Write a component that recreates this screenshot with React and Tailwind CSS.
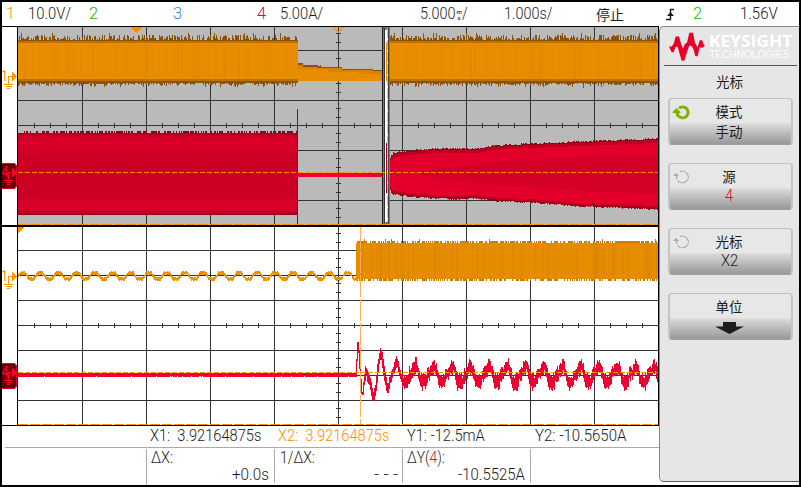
import React, { useLayoutEffect, useRef, useState } from 'react'

const ORANGE = '#ff8c00'

// Small seeded generator so that the noise is the same on each render
function makeRandom(seed) {
  let s = seed
  return () => {
    s = (s * 1664525 + 1013904223) % 4294967296
    return s / 4294967296
  }
}

// Linear interpolation over [x, y] points
function lerp(points, x) {
  if (x <= points[0][0]) return points[0][1]
  for (let i = 1; i < points.length; i++) {
    const [x1, y1] = points[i]
    const [x0, y0] = points[i - 1]
    if (x <= x1) return y0 + ((y1 - y0) * (x - x0)) / (x1 - x0)
  }
  return points[points.length - 1][1]
}

const bar = (x, top, bottom) => `M${x} ${top}h1V${bottom}h-1z`

// One path made of 1px wide columns
function columns(from, to, fn) {
  let d = ''
  for (let x = from; x < to; x++) {
    const r = fn(x)
    if (r) d += bar(x, Math.round(r[0]), Math.round(r[1]))
  }
  return d
}

// Stretches a line of text to the given width
function Fit({ w, className = '', children }) {
  const ref = useRef(null)
  const [scale, setScale] = useState(1)

  useLayoutEffect(() => {
    setScale(w / ref.current.offsetWidth)
  }, [w])

  return (
    <div className={`overflow-visible whitespace-pre ${className}`} style={{ width: w }}>
      <span ref={ref} className="inline-block origin-left" style={{ transform: `scaleX(${scale})` }}>
        {children}
      </span>
    </div>
  )
}

function Header() {
  return (
    <div className="grid h-6 grid-cols-[22px_61px_84px_84px_23px_140px_84px_93px_69px_28px_47px_1fr] items-center pl-1 text-[16.5px] leading-6 text-[#1c1c1c]">
      <Fit w={9} className="text-[#ff9500]">1</Fit>
      <Fit w={43}>10.0V/</Fit>
      <Fit w={9} className="text-[#22b800]">2</Fit>
      <Fit w={9} className="text-[#2f86ff]">3</Fit>
      <Fit w={9} className="text-[#f00030]">4</Fit>
      <Fit w={43}>5.00A/</Fit>
      <div className="flex items-center">
        <Fit w={36}>5.000</Fit>
        <div className="flex w-[6px] flex-col items-center text-[6px] leading-[7px] font-medium">
          <span className="-mb-px">m</span>
          <span>s</span>
        </div>
        <Fit w={6}>/</Fit>
      </div>
      <Fit w={48}>1.000s/</Fit>
      <span className="-ml-px font-['Noto_Sans_CJK_SC',sans-serif] text-[14px] leading-[23px] font-normal">停止</span>
      <svg className="h-[13px] w-[9px]" viewBox="0 0 9 13" fill="none" stroke="#1c1c1c">
        <path d="M0 11.5h4.5V1.5H8" strokeWidth="1.4" />
        <path d="M1 8l3.5-4L8 8z" fill="#1c1c1c" stroke="none" />
      </svg>
      <Fit w={9} className="-ml-px text-[#22b800]">2</Fit>
      <Fit w={38} className="-ml-px">1.56V</Fit>
    </div>
  )
}

function Ground({ y, color }) {
  return (
    <g fill={color} shapeRendering="crispEdges">
      <path d={`M12 ${y - 4}h1v1h1v1h1v1h1v1h1v1h-1v1h-1v1h-1v1h-1v1h-1z`} />
      <rect x="8" y={y} width="4" height="1" />
      <rect x="8" y={y} width="1" height="8" />
      <rect x="4" y={y + 8} width="9" height="1" />
      <rect x="6" y={y + 10} width="6" height="1" />
      <rect x="7" y={y + 12} width="3" height="1" />
    </g>
  )
}

// Channel markers left of a graticule
function Strip({ top, y1, y4 }) {
  return (
    <svg className="h-[198px] w-[15px] shrink-0 font-normal" viewBox={`2 ${top} 15 198`}>
      <text x="1" y={y1 + 5} fontSize="14" fill="#ff9500" textLength="7" lengthAdjust="spacingAndGlyphs">1</text>
      <Ground y={y1} color="#ff9500" />
      <g shapeRendering="crispEdges">
        <path d={`M2 ${y4 - 9}h13v1h1v1h1v22h-1v1h-1v1h-13z`} fill="#e00028" />
        <path d={`M2 ${y4 - 8}h13v2h1v20h-1v2h-13z`} fill="#6a0000" />
      </g>
      <text x="1.5" y={y4 + 4.5} fontSize="14" fill="#ff0032" textLength="7" lengthAdjust="spacingAndGlyphs">4</text>
      <Ground y={y4} color="#ff0032" />
    </svg>
  )
}

function Grid({ top }) {
  const mid = top + 98
  const xs = [82, 146, 210, 274, 338, 402, 466, 530, 594]
  const rows = [-75, -50, -25, 0, 25, 50, 75]
  let ticks = ''
  for (let x = 34; x < 658; x += 16) ticks += `M${x} ${mid - 2}h1v5h-1z`
  for (let i = -11; i < 12; i++) ticks += `M336 ${mid + Math.round((i * 25) / 3)}h5v1h-5z`
  return (
    <g fill="#333" shapeRendering="crispEdges">
      {xs.map((x) => <rect key={x} x={x} y={top} width="1" height="198" />)}
      {rows.map((r) => <rect key={r} x="18" y={mid + r} width="640" height="1" />)}
      <path d={ticks} />
    </g>
  )
}

function OverviewPlot() {
  const rnd = makeRandom(7)
  const inBand = (x) => x < 298 || x >= 389
  const tip = () => {
    const r = rnd()
    return r > 0.96 ? 8 : r > 0.65 ? 5 + rnd() : r > 0.35 ? 2 + rnd() * 2 : 1
  }
  const yellowTips = columns(18, 658, (x) => (inBand(x) ? [41 - tip(), 82 + rnd() * rnd() * 5 + 1] : null))
  const yellowBand = columns(18, 658, (x) => (inBand(x) ? [41, 81] : null))
  const yellowCore = columns(18, 658, (x) => (inBand(x) ? [43, 79] : null))
  const stripes = columns(18, 658, (x) => (inBand(x) && rnd() > 0.82 ? [44, 78] : null))

  const topEdge = [[389, 159], [391, 156], [393, 153], [410, 151], [433, 149], [477, 149], [493, 146], [530, 144], [580, 142], [630, 140], [658, 139]]
  const bottomEdge = [[389, 189], [393, 194], [410, 196], [433, 198], [460, 199], [473, 198], [500, 201], [530, 202], [580, 206], [610, 207], [658, 209]]
  const redTips = columns(389, 658, (x) => [lerp(topEdge, x) - (rnd() > 0.6 ? 1 : 0), lerp(bottomEdge, x) + (rnd() > 0.6 ? 1 : 0)])
  const redMid = columns(389, 658, (x) => [lerp(topEdge, x) + 1, lerp(bottomEdge, x) - 1])
  const redCore = columns(389, 658, (x) => [lerp(topEdge, x) + 4, lerp(bottomEdge, x) - 3])
  const redInner = columns(420, 658, (x) => {
    const inset = lerp([[420, 22], [470, 16], [658, 15]], x)
    return [lerp(topEdge, x) + inset, lerp(bottomEdge, x) - inset]
  })
  const leftTips = columns(20, 297, () => [rnd() > 0.45 ? 131 : 133, 214])

  return (
    <svg className="block h-[198px] w-[640px] bg-[#bababa]" viewBox="18 27 640 198" shapeRendering="crispEdges">
      <defs>
        <linearGradient id="redBlock" x1="0" y1="0" x2="0" y2="1">
          <stop offset="0" stopColor="#a80020" />
          <stop offset="0.04" stopColor="#cc0026" />
          <stop offset="0.1" stopColor="#dc002a" />
          <stop offset="0.3" stopColor="#cc0024" />
          <stop offset="0.75" stopColor="#cc0024" />
          <stop offset="0.92" stopColor="#dc002a" />
          <stop offset="0.97" stopColor="#c00024" />
          <stop offset="1" stopColor="#900018" />
        </linearGradient>
      </defs>
      <Grid top={27} />

      {/* Channel 1 */}
      <path d={yellowTips} fill="#8c5400" />
      <path d={yellowBand} fill="#bc7200" />
      <path d={yellowCore} fill="#e88c00" />
      <path d={stripes} fill="#e28800" />
      <path d="M298 63h5v2h15v1h2v-1h1v2h21v2h31v1h9v10h-84z" fill="#8c5400" />
      <path d="M298 65h5v2h15v1h24v2h31v1h9v10h-84z" fill="#d98200" />
      <path d="M298 69h30v3h30v2h24v7h-84z" fill="#e88c00" />

      {/* Channel 4 */}
      <path d={leftTips} fill="#900018" />
      <rect x="18" y="133" width="279" height="82" fill="url(#redBlock)" />
      <rect x="297" y="109" width="1" height="115" fill="#a00020" />
      <rect x="298" y="173" width="84" height="4" fill="#f00030" />
      <path d={redTips} fill="#980018" />
      <path d={redMid} fill="#bc0022" />
      <path d={redCore} fill="#e2002a" />
      <path d={redInner} fill="#d40026" />

      {/* Zoomed part of the record */}
      <rect x="382" y="27" width="8" height="197" fill="#777" />
      <rect x="382" y="27" width="1" height="197" fill="#1c1c1c" />
      <rect x="384" y="28" width="1" height="195" fill="#333" />
      <rect x="385" y="30" width="3" height="192" fill="#fff" />
      <rect x="386" y="42" width="1" height="39" fill="#e88c00" />
      <rect x="386" y="143" width="1" height="50" fill="#a00020" />
      <rect x="388" y="27" width="1" height="197" fill="#444" />
      <path d="M387.5 28V222" stroke="#ffae50" strokeDasharray="10 2" />

      <path d="M18 172.5H658" stroke="#ff9500" strokeDasharray="5 2" />
      <path d="M18 224.5H658" stroke={ORANGE} strokeDasharray="10 2" />
      <path d="M131 27h11l-5.5 6z" fill={ORANGE} />
      <path d="M333.5 27l5 5 5-5" fill="none" stroke={ORANGE} shapeRendering="auto" strokeWidth="1.3" />
    </svg>
  )
}

// Upper and lower edge of the channel 4 ripple over one period
const RIPPLE_TOP = [[0, 376], [5, 376], [7, 370], [9, 368], [12, 361], [14, 360], [15, 364], [17, 370], [18.4, 376]]
const RIPPLE_BOTTOM = [[0, 388], [5, 388], [6.5, 381], [9, 378], [12, 374], [14, 371], [16, 377], [18.4, 388]]
const START = [[356, 375], [357, 360], [358, 343], [359, 352], [360, 368], [361, 380], [362.5, 400], [364, 383], [366, 370], [368, 378], [370, 381], [372, 392], [373.5, 399], [376, 388], [378, 369], [380.5, 352], [382, 356], [384, 371], [386, 382], [388, 390], [390, 381], [393, 372], [396, 363], [397, 361], [399, 369], [402, 380]]

function ZoomPlot() {
  const rnd = makeRandom(31)
  const tips = columns(356, 658, () => [243 - (rnd() > 0.35 ? 2 : 0) - (rnd() > 0.96 ? 2 : 0), 279 + (rnd() > 0.5 ? 2 : 0)])
  const body = columns(356, 658, () => [243, 279])
  const stripes = columns(358, 658, () => (rnd() > 0.75 ? [243, 279] : null))
  const ripple = columns(18, 357, (x) => {
    const c = Math.cos(((x - 22) / 18.05) * Math.PI * 2) * 1.5
    const y = 276 - Math.max(-1, Math.min(1, c)) * 3
    return [y - 2 + (rnd() > 0.75 ? 1 : 0), y + 2 - (rnd() > 0.8 ? 1 : 0)]
  })
  const flat = columns(18, 357, () => [373, rnd() > 0.96 ? 376 : 377])
  const start = columns(356, 402, (x) => {
    const a = lerp(START, x)
    const b = lerp(START, x + 1)
    const pad = x < 364 ? 1 : 2 + rnd() * 3
    return [Math.min(a, b) - pad, Math.max(a, b) + pad]
  })
  const osc = columns(402, 658, (x) => {
    const p = (x - 402) % 18.35
    const damp = (x - 402) / 256
    const peak = p > 9 && p < 15 ? damp * 2 : 0
    return [lerp(RIPPLE_TOP, p) + peak + rnd() * 6 - 4, lerp(RIPPLE_BOTTOM, p) + rnd() * 6 - 2.5]
  })

  return (
    <svg className="block h-[198px] w-[640px] bg-white" viewBox="18 227 640 198" shapeRendering="crispEdges">
      <Grid top={227} />
      <path d={ripple} fill="#ee9200" />
      <path d={tips} fill="#cc7c00" />
      <path d={body} fill="#e68c00" />
      <path d={stripes} fill="#de8600" />
      <path d={flat} fill="#f00030" />
      <path d={start} fill="#ee0030" />
      <path d={osc} fill="#ee0030" />
      <path d="M18 372.5H658" stroke="#ff9500" strokeDasharray="5 2" />
      <path d="M360.5 227V425" stroke="#ffae50" strokeDasharray="22 2" />
      <path d="M18 424.5H658" stroke={ORANGE} strokeDasharray="10 2" />
      <path d="M18 227h6l-6 6z" fill={ORANGE} />
    </svg>
  )
}

function Measurements() {
  return (
    <div className="h-[59px] text-[16.5px] text-[#1c1c1c]">
      <div className="ml-[3px] grid h-[22px] grid-cols-[145px_128px_128px_128px_1fr] border-b border-[#aaa] leading-[20px]">
        <span />
        <Fit w={111}>X1:  3.92164875s</Fit>
        <Fit w={111} className="text-[#ff8c00]">X2:  3.92164875s</Fit>
        <Fit w={78} className="ml-px">Y1: -12.5mA</Fit>
        <Fit w={91} className="ml-px">Y2: -10.5650A</Fit>
      </div>
      <div className="mt-px grid h-9 grid-cols-[144px_128px_128px_128px_1fr] leading-[17px]">
        <span />
        <div className="border-l border-[#aaa] pl-1">
          <Fit w={22}>ΔX:</Fit>
          <Fit w={37} className="ml-[81px]">+0.0s</Fit>
        </div>
        <div className="mb-0.5 border-l border-[#aaa] pl-[5px]">
          <Fit w={35}>1/ΔX:</Fit>
          <Fit w={24} className="ml-[94px]">- - -</Fit>
        </div>
        <div className="mb-0.5 border-l border-[#aaa] pl-1">
          <Fit w={38}>ΔY(<span className="text-[#f00030]">4</span>):</Fit>
          <Fit w={67} className="ml-[51px]">-10.5525A</Fit>
        </div>
        <div className="mb-0.5 border-l border-[#aaa]" />
      </div>
    </div>
  )
}

function Knob({ active }) {
  return (
    <svg className="absolute top-[5px] left-[2px] h-4 w-[18px]" viewBox="0 0 18 16" fill="none">
      <path
        d={active ? 'M7 4.2A5.6 5.4 0 1 1 6.6 12.2' : 'M8 2.6A6 5.8 0 1 1 5.6 11.6'}
        stroke={active ? '#7fb000' : '#a8a8a8'}
        strokeWidth={active ? 3 : 1.1}
      />
      <path d={active ? 'M0 8.5l4.5-4.5 4.5 4.5-2 1v3H4v-3z' : 'M1 7l3-3 3 3zM4 6h1.2v4H4z'} fill={active ? '#7fb000' : '#a8a8a8'} />
    </svg>
  )
}

function SoftKey({ label, knob, children }) {
  return (
    <div className="relative h-[47px] rounded-[4px] border-x-2 border-t border-b border-x-[#c4c4c4] border-t-[#bfbfbf] border-b-[#a0a0a0] bg-linear-to-b from-[#e7e7e7] from-52% via-[#d9d9d9] via-56% to-[#989898] text-center text-[#1c1c1c]">
      {knob && <Knob active={knob === 'active'} />}
      <div className="-ml-[3px]">
        <div className="pt-0.5 font-['Noto_Sans_CJK_SC',sans-serif] text-[13.5px] leading-5 font-normal">{label}</div>
        <div className="flex h-5 justify-center">{children}</div>
      </div>
    </div>
  )
}

function Logo() {
  return (
    <div className="ml-[5px] flex h-[39px] w-[133px] items-start border-b border-[#555] pt-[5px] pl-[5px]">
      <svg className="h-[29px] w-9 shrink-0" viewBox="0 0 108 86" fill="#e90029">
        <path d="M0 43h8l6-8 6-22h10l7 24 5 12 6-14 6-4 7-29h11l6 30 8 14 6-22h8l3 12 5 4-6 6-10 0-6 26h-7l-6-22-7-10-6 2-6 18-8 26h-8l-7-24-5-18h-6l-6 16h-6z" />
      </svg>
      <div className="ml-[4px] pt-px text-white">
        <Fit w={83} className="font-['Open_Sans',sans-serif] text-[16.5px] leading-[15px] font-bold">KEYSIGHT</Fit>
        <Fit w={80} className="mt-px font-['Liberation_Sans',sans-serif] text-[10.5px] leading-[10px] font-normal">TECHNOLOGIES</Fit>
      </div>
    </div>
  )
}

function SideMenu() {
  return (
    <div className="h-[456px] w-[140px] rounded-l-[5px] border-t border-b border-l border-t-[#888] border-b-[#555] border-l-[#888] bg-[#e6e6e6]">
      <div className="-ml-px">
        <Logo />
        <div className="h-[32px] pt-[5px] pl-px text-center font-['Noto_Sans_CJK_SC',sans-serif] text-[13.5px] leading-5 font-normal text-[#1c1c1c]">光标</div>
        <div className="mr-[6px] ml-[9px] flex flex-col gap-[18px]">
          <SoftKey label="模式" knob="active">
            <span className="font-['Noto_Sans_CJK_SC',sans-serif] text-[13.5px] leading-5 font-normal">手动</span>
          </SoftKey>
          <SoftKey label="源" knob="idle">
            <Fit w={8} className="text-[16.5px] leading-5 text-[#f00030]">4</Fit>
          </SoftKey>
          <SoftKey label="光标" knob="idle">
            <Fit w={17} className="text-[16.5px] leading-5">X2</Fit>
          </SoftKey>
          <SoftKey label="单位">
            <svg className="mt-[6px] h-3 w-[29px]" viewBox="0 0 29 12">
              <path d="M8 0h13v4.5h8L14.5 12 0 4.5h8z" fill="#1c1c1c" />
            </svg>
          </SoftKey>
        </div>
      </div>
    </div>
  )
}

export default function App() {
  return (
    <div className="h-[487px] w-[802px] overflow-hidden bg-white font-['Roboto','Liberation_Sans',sans-serif] font-light">
      <div className="h-full w-[801px] border-2 border-black">
        <Header />
        <div className="flex">
          <div className="w-[657px] border-t border-black">
            <div className="border-r border-b border-black">
              <div className="flex border-b-2 border-black">
                <Strip top={27} y1={76} y4={172} />
                <div className="border-l border-black"><OverviewPlot /></div>
              </div>
              <div className="flex">
                <Strip top={227} y1={276} y4={372} />
                <div className="border-l border-black"><ZoomPlot /></div>
              </div>
            </div>
            <Measurements />
          </div>
          <SideMenu />
        </div>
      </div>
    </div>
  )
}
